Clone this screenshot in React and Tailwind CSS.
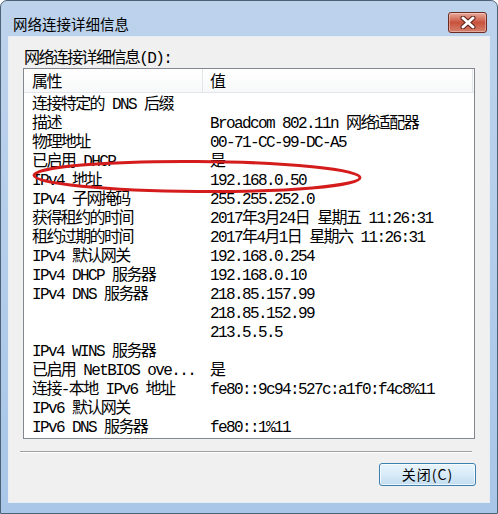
import React from 'react'

const rows = [
  ['连接特定的 DNS 后缀', ''],
  ['描述', 'Broadcom 802.11n 网络适配器'],
  ['物理地址', '00-71-CC-99-DC-A5'],
  ['已启用 DHCP', '是'],
  ['IPv4 地址', '192.168.0.50'],
  ['IPv4 子网掩码', '255.255.252.0'],
  ['获得租约的时间', '2017年3月24日 星期五 11:26:31'],
  ['租约过期的时间', '2017年4月1日 星期六 11:26:31'],
  ['IPv4 默认网关', '192.168.0.254'],
  ['IPv4 DHCP 服务器', '192.168.0.10'],
  ['IPv4 DNS 服务器', '218.85.157.99'],
  ['', '218.85.152.99'],
  ['', '213.5.5.5'],
  ['IPv4 WINS 服务器', ''],
  ['已启用 NetBIOS ove...', '是'],
  ['连接-本地 IPv6 地址', 'fe80::9c94:527c:a1f0:f4c8%11'],
  ['IPv6 默认网关', ''],
  ['IPv6 DNS 服务器', 'fe80::1%11'],
]

const listFont = "font-['Liberation_Mono','Noto_Sans_CJK_SC',monospace] text-[16px] tracking-[-1.6px] text-black"

export default function App() {
  return (
    <div className="relative w-[498px] h-[514px] bg-gradient-to-b from-[#bdd3ec] via-[#b3cdea] to-[#a9c6e8] border border-[#4d6177] rounded-t-[7px] overflow-hidden">
      {/* title bar */}
      <div className="h-[35px] flex items-start">
        <div className="mt-[13px] ml-[12px] font-['Noto_Sans_CJK_SC',sans-serif] text-[14.5px] leading-[20px] text-black">
          网络连接详细信息
        </div>
        <div className="ml-auto mr-[10px] mt-[11px] w-[39px] h-[21px] rounded-[3px] border border-[#6e2b22] bg-gradient-to-b from-[#e9a99b] via-[#c8523d] to-[#d5806b] flex items-center justify-center shadow-[inset_0_0_0_1px_rgba(255,255,255,0.35)]">
          <svg width="16" height="13" viewBox="0 0 16 13">
            <path d="M3 2 L13 11 M13 2 L3 11" stroke="#5a2019" strokeWidth="5" strokeLinecap="round" />
            <path d="M3 2 L13 11 M13 2 L3 11" stroke="#ffffff" strokeWidth="3" strokeLinecap="round" />
          </svg>
        </div>
      </div>

      {/* client area */}
      <div className="ml-[7px] w-[482px] h-[467px] bg-[#f0f0f0] border border-[#e6edf5] flex flex-col">
        <div className={`${listFont} leading-[25px] h-[19px] mt-[10px] ml-[15px]`}>网络连接详细信息(D):</div>

        <div className="ml-[14px] mt-[2px] w-[452px] h-[371px] bg-white border border-[#828790] flex flex-col">
          <div className="h-[24px] flex border-b border-[#e3e5e8] bg-gradient-to-b from-white to-[#f7f8f9]">
            <div className={`${listFont} leading-[28px] w-[179px] pl-[8px] border-r border-[#e3e5e8]`}>属性</div>
            <div className={`${listFont} leading-[28px] w-[270px] pl-[7px] border-r border-[#e3e5e8]`}>值</div>
          </div>
          {rows.map(([k, v], i) => (
            <div key={i} className={`${listFont} leading-[25px] h-[19px] flex whitespace-nowrap`}>
              <div className="w-[179px] pl-[8px]">{k}</div>
              <div className="pl-[7px]">{v}</div>
            </div>
          ))}
        </div>

        <div className="ml-[11px] mt-[12px] w-[452px] h-[1px] bg-[#a0a0a0]" />
        <div className="ml-[11px] w-[452px] h-[1px] bg-white" />

        <div className="self-end mr-[13px] mt-[10px] w-[97px] h-[23px] rounded-[3px] border border-[#3c7fb1] bg-gradient-to-b from-[#eaf5fc] via-[#d8ebf8] to-[#c3ddf0] shadow-[inset_0_0_0_1px_rgba(255,255,255,0.7)] flex items-center justify-center font-['Noto_Sans_CJK_SC',sans-serif] text-[14px] tracking-[1px] text-black">
          关闭(C)
        </div>
      </div>

      {/* hand-drawn highlight */}
      <svg className="absolute left-0 top-0 pointer-events-none" width="498" height="514">
        <ellipse cx="196" cy="175.5" rx="163" ry="15" fill="none" stroke="#d41c1c" strokeWidth="3" transform="rotate(0.4 196 175.5)" />
      </svg>
    </div>
  )
}
